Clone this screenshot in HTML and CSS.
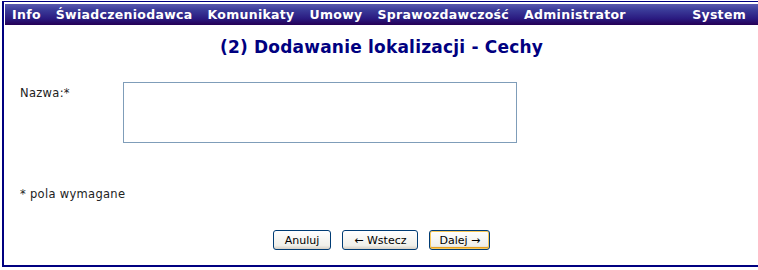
FILE: index.html
```html
<!DOCTYPE html>
<html lang="pl">
<head>
    <meta charset="UTF-8">
    <title>Dodawanie lokalizacji - Cechy</title>
    <link rel="stylesheet" href="styles.css">
</head>
<body>
    <div class="frame">
        <div class="menu">
            <span class="menu-item">Info</span>
            <span class="menu-item">Świadczeniodawca</span>
            <span class="menu-item">Komunikaty</span>
            <span class="menu-item">Umowy</span>
            <span class="menu-item">Sprawozdawczość</span>
            <span class="menu-item">Administrator</span>
            <span class="menu-item menu-right">System</span>
        </div>

        <h1 class="title">(2) Dodawanie lokalizacji - Cechy</h1>

        <div class="form-row">
            <label class="form-label" for="nazwa">Nazwa:*</label>
            <textarea id="nazwa" class="form-input"></textarea>
        </div>

        <p class="required-note">* pola wymagane</p>

        <div class="buttons">
            <button class="btn">Anuluj</button>
            <button class="btn">&larr; Wstecz</button>
            <button class="btn btn-default">Dalej &rarr;</button>
        </div>
    </div>
</body>
</html>
```

FILE: styles.css
```css
body {
    margin: 0;
    padding: 1px 0 0 2px;
    font-family: "DejaVu Sans", Verdana, sans-serif;
    background: white;
}
.frame {
    border-top: 1px solid #000080;
    border-left: 2px solid #000080;
    border-bottom: 2px solid #000080;
    height: 266px;
    padding: 2px 0 0 1px;
    box-sizing: border-box;
}
.menu {
    display: flex;
    align-items: center;
    height: 21px;
    padding: 0 12px 0 7px;
    background: linear-gradient(#5a5ab0 0%, #3a3a98 30%, #2a1a80 70%, #250055 100%);
}
.menu-item {
    color: white;
    font-weight: bold;
    font-size: 12.5px;
    margin-right: 15px;
    letter-spacing: 0.3px;
}
.menu-right {
    margin-left: auto;
    margin-right: 0;
}
.title {
    text-align: center;
    color: #000080;
    font-size: 17px;
    letter-spacing: 0.2px;
    margin: 12px 0 0 0;
    height: 45px;
}
.form-row {
    display: flex;
    align-items: flex-start;
    padding-left: 15px;
}
.form-label {
    width: 103px;
    font-size: 11.5px;
    letter-spacing: 0.3px;
    color: #222;
    margin-top: 4px;
}
.form-input {
    width: 394px;
    height: 61px;
    border: 1px solid #7f9db9;
    resize: none;
    padding: 0;
    box-sizing: border-box;
    margin: 0;
}
.required-note {
    font-size: 11.5px;
    letter-spacing: 0.3px;
    color: #222;
    padding-left: 15px;
    margin: 44px 0 0 0;
}
.buttons {
    display: flex;
    justify-content: center;
    gap: 11px;
    margin-top: 29px;
}
.btn {
    font-family: "DejaVu Sans", Verdana, sans-serif;
    font-size: 11px;
    color: black;
    height: 20px;
    padding: 0 11px;
    border: 1px solid #003c74;
    border-radius: 3px;
    background: linear-gradient(#ffffff, #f0f0ea 80%, #d6d0c5);
}
.btn-default {
    padding: 0 9px;
    box-shadow: inset 0 0 0 1px #f8c858, inset 0 -2px 0 0 #e5a020;
}
```
